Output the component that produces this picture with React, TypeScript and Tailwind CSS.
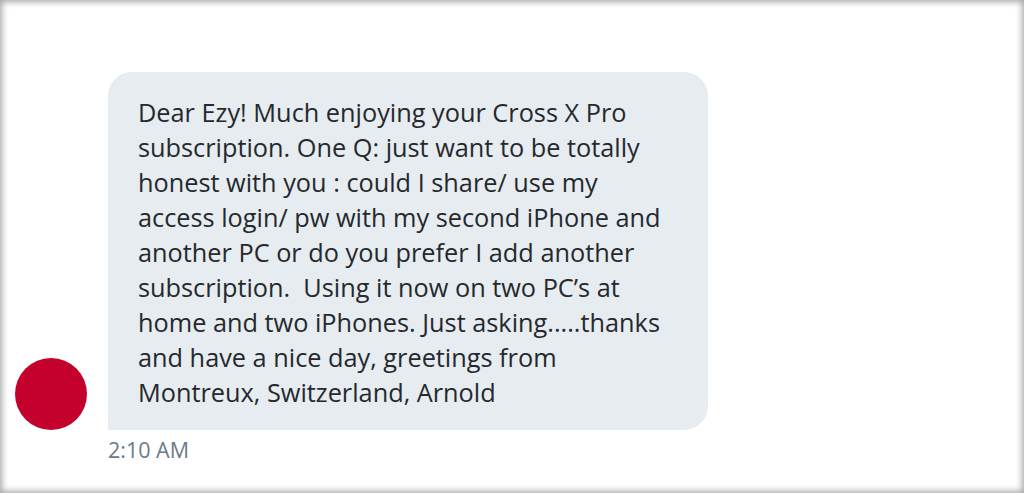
export default function App() {
    return (
        <div className="w-[1024px] h-[493px] bg-white shadow-[inset_0_0_6px_2px_rgba(0,0,0,0.35)] pt-[72px] pl-[15px] font-['Open_Sans',sans-serif]">
            <div className="flex items-end gap-[21px]">
                <div className="w-[72px] h-[72px] rounded-full bg-[#c4002c] shrink-0" />
                <div className="w-[600px] bg-[#e6ecf0] rounded-[24px] rounded-bl-none pl-[30px] pr-[20px] pt-[23px] pb-[20px] text-[25.3px] leading-[35px] text-[#25292d]">
                    Dear Ezy! Much enjoying your Cross X Pro<br />
                    subscription. One Q: just want to be totally<br />
                    honest with you : could I share/ use my<br />
                    access login/ pw with my second iPhone and<br />
                    another PC or do you prefer I add another<br />
                    subscription.&nbsp; Using it now on two PC’s at<br />
                    home and two iPhones. Just asking.....thanks<br />
                    and have a nice day, greetings from<br />
                    Montreux, Switzerland, Arnold
                </div>
            </div>
            <p className="ml-[93px] mt-[6px] text-[21.5px] leading-[28px] text-[#6b7a87]">2:10 AM</p>
        </div>
    )
}
